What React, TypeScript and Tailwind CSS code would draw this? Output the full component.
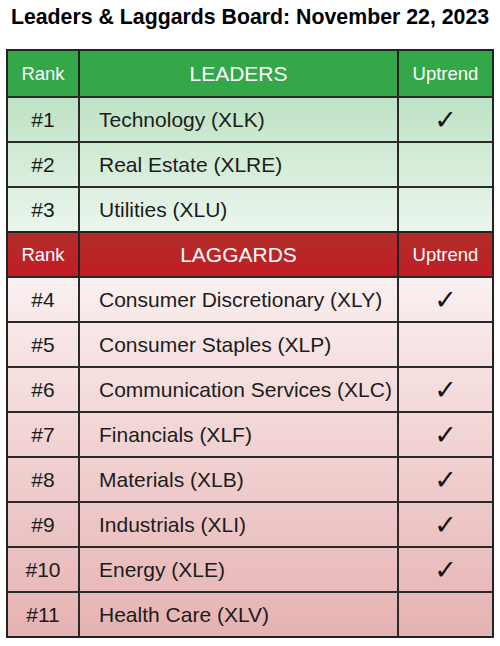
const leaders = [
  { rank: "#1", name: "Technology (XLK)", up: true },
  { rank: "#2", name: "Real Estate (XLRE)", up: false },
  { rank: "#3", name: "Utilities (XLU)", up: false },
];

const laggards = [
  { rank: "#4", name: "Consumer Discretionary (XLY)", up: true },
  { rank: "#5", name: "Consumer Staples (XLP)", up: false },
  { rank: "#6", name: "Communication Services (XLC)", up: true },
  { rank: "#7", name: "Financials (XLF)", up: true },
  { rank: "#8", name: "Materials (XLB)", up: true },
  { rank: "#9", name: "Industrials (XLI)", up: true },
  { rank: "#10", name: "Energy (XLE)", up: true },
  { rank: "#11", name: "Health Care (XLV)", up: false },
];

type Row = { rank: string; name: string; up: boolean };

function HeaderRow({ title, className }: { title: string; className: string }) {
  return (
    <div className={`grid h-[45px] grid-cols-[70px_319px_1fr] border-t-2 border-[#222] text-white first:border-t-0 ${className}`}>
      <div className="flex items-center justify-center text-[18.5px]">Rank</div>
      <div className="flex items-center justify-center border-l-2 border-[#222] text-[21px]">{title}</div>
      <div className="flex items-center justify-center border-l-2 border-[#222] text-[18.5px]">Uptrend</div>
    </div>
  );
}

function DataRow({ row }: { row: Row }) {
  return (
    <div className="grid h-[45px] grid-cols-[70px_319px_1fr] border-t-2 border-[#2a2a2a] text-[21px] text-[#1c1c1c]">
      <div className="flex items-center justify-center">{row.rank}</div>
      <div className="flex items-center border-l-2 border-[#2a2a2a] pl-[19px]">{row.name}</div>
      <div className="flex items-center justify-center border-l-2 border-[#2a2a2a]">
        {row.up && (
          <span className="font-[family-name:'DejaVu_Sans',sans-serif] text-[27px] leading-none text-[#111]">✓</span>
        )}
      </div>
    </div>
  );
}

export default function App() {
  return (
    <div className="h-[646px] w-[500px] bg-white font-[family-name:'Liberation_Sans',Arial,sans-serif]">
      <h1 className="pt-[5px] text-center text-[21.3px] font-bold leading-[24px] text-black">
        Leaders &amp; Laggards Board: November 22, 2023
      </h1>
      <div className="mx-[6px] mt-[20px] w-[488px] border-2 border-[#222]">
        <HeaderRow title="LEADERS" className="bg-[#34a748]" />
        <div className="bg-gradient-to-b from-[#bde2c4] to-[#ebf6ed]">
          {leaders.map((r) => (
            <DataRow key={r.rank} row={r} />
          ))}
        </div>
        <HeaderRow title="LAGGARDS" className="bg-gradient-to-b from-[#b02d29] to-[#c21c24]" />
        <div className="bg-gradient-to-b from-[#faf0f0] to-[#e6b2b3]">
          {laggards.map((r) => (
            <DataRow key={r.rank} row={r} />
          ))}
        </div>
      </div>
    </div>
  );
}
